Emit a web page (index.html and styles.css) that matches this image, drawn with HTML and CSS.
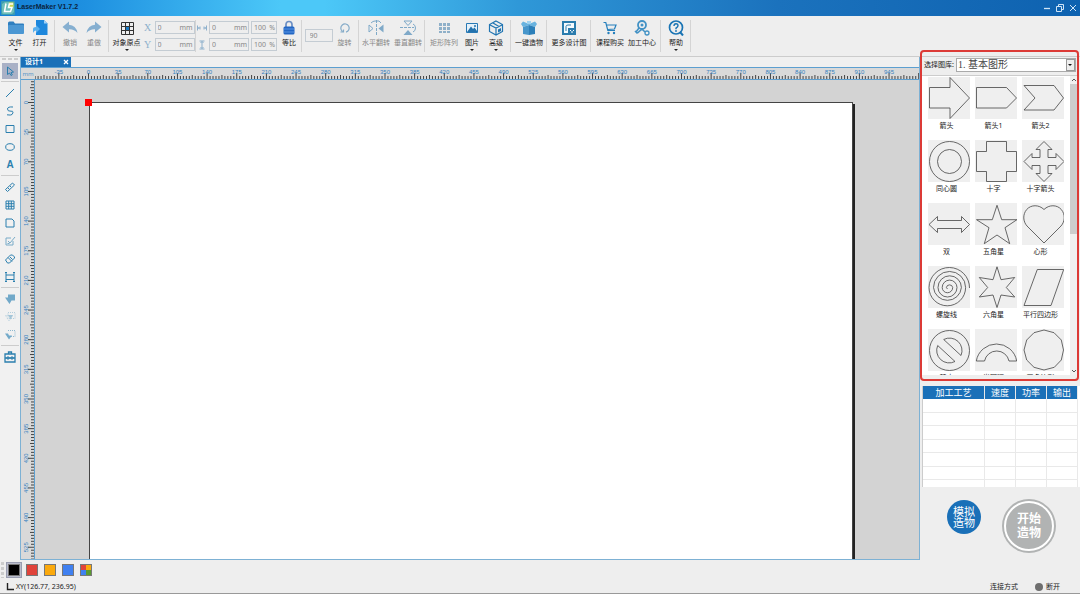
FILE: index.html
```html
<!DOCTYPE html>
<html lang="zh-CN">
<head>
    <meta charset="UTF-8">
    <meta name="viewport" content="width=device-width, initial-scale=1.0">
    <title>LaserMaker V1.7.2</title>
    <link rel="stylesheet" href="styles.css">
</head>
<body>
    <header class="titlebar">
        <svg class="logo" viewBox="0 0 14 14"><rect width="14" height="14" rx="1" fill="#3c9bb2"/><path d="M1 3l3-2h8l1 2v8l-2 2H2l-1-1z" fill="#6fbfba"/><path d="M8 1.500h4.500v4.500H8z" fill="#cfd64e"/><path d="M5 2.500L3.500 10.500H9.500L11 6.500H7.500L8.300 3H12" fill="none" stroke="#fff" stroke-width="1.500"/></svg>
        <h1>LaserMaker V1.7.2</h1>
        <div class="window-buttons">
            <button aria-label="最小化"><svg viewBox="0 0 8 8"><path d="M1 4.500h6" stroke-width="1.300"/></svg></button>
            <button aria-label="还原"><svg viewBox="0 0 8 8"><path d="M.5 2.500h5v5h-5zM2.500 2.500v-2h5v5h-2"/></svg></button>
            <button aria-label="关闭"><svg viewBox="0 0 8 8"><path d="M1 1l6 6M7 1L1 7"/></svg></button>
        </div>
    </header>

    <nav class="toolbar">
        <div class="group g-file">
            <button class="tool has-menu"><svg viewBox="0 0 16 16"><path d="M0 3q0-1.500 1.500-1.500h4L7 3.500h8q1 0 1 1V7H0z" fill="#2f7fc0"/><rect y="5" width="16" height="9" rx="1" fill="#4b97d3"/></svg>文件</button>
            <button class="tool"><svg viewBox="0 0 16 16"><path d="M4 0h8l3.500 3.500V15H4z" fill="#1d87dc"/><path d="M12 0v3.500h3.500z" fill="#9fd0f5"/><path d="M1 13V9q0-2 3-2V5l4 4-4 4v-2.500q-2 0-3 2.500z" fill="#5ab0ee"/></svg>打开</button>
        </div>
        <div class="group g-undo">
            <button class="tool dim"><svg viewBox="0 0 16 16"><path d="M.5 7L7 1.500v3.200q7 .3 8.500 8.300Q12 9 7 9.300v3.200z" fill="#86afd0"/></svg>撤销</button>
            <button class="tool dim"><svg viewBox="0 0 16 16"><path d="M15.500 7L9 1.500v3.200Q2 5 .5 13 4 9 9 9.300v3.200z" fill="#86afd0"/></svg>重做</button>
        </div>
        <div class="group g-position">
            <button class="tool wide has-menu"><svg viewBox="0 0 16 16"><path d="M6 6h4v4H6z" fill="#1779c4"/><path d="M2.500 2.500h12v12h-12zM6.500 2.500v12M10.500 2.500v12M2.500 6.500h12M2.500 10.500h12" fill="none" stroke="#333"/></svg>对象原点</button>
            <div class="fields">
                <div class="field"><label for="posX">X</label><span class="box"><input id="posX" value="0"><i>mm</i></span></div>
                <div class="field"><label for="posY">Y</label><span class="box"><input id="posY" value="0"><i>mm</i></span></div>
            </div>
        </div>
        <div class="group g-size">
            <div class="fields">
                <div class="field">
                    <label for="sizeW" aria-label="宽度"><svg viewBox="0 0 10 10"><path d="M.5 2.500v5M9.500 2.500v5M1 5h3M9 5H6M3 3.500L1.500 5 3 6.500M7 3.500L8.500 5 7 6.500"/></svg></label>
                    <span class="box"><input id="sizeW" value="0"><i>mm</i></span>
                    <span class="box percent"><input aria-label="宽度百分比" value="100"><i>%</i></span>
                </div>
                <div class="field">
                    <label for="sizeH" aria-label="高度"><svg viewBox="0 0 10 10"><path d="M2.500 1h5M2.500 9h5M5 1.500v7M3.500 3L5 1.500 6.500 3M3.500 7L5 8.500 6.500 7"/></svg></label>
                    <span class="box"><input id="sizeH" value="0"><i>mm</i></span>
                    <span class="box percent"><input aria-label="高度百分比" value="100"><i>%</i></span>
                </div>
            </div>
            <button class="tool"><svg viewBox="0 0 16 16"><path d="M5 7V4.500q0-3 3-3t3 3V7" fill="none" stroke="#6b8fc4" stroke-width="1.700"/><rect x="2.500" y="6.500" width="11" height="8" rx="1.500" fill="#2367c4"/><path d="M3 9h10M3 12h10" stroke="#5b95e2"/></svg>等比</button>
        </div>
        <div class="group g-rotate">
            <span class="box angle"><input aria-label="角度" value="90"></span>
            <button class="tool dim"><svg viewBox="0 0 16 16"><path d="M5.500 11.500A4.200 4.200 0 1 1 9 12.200M3.500 12h3V9.500" fill="none" stroke="#85abc8" stroke-width="1.200"/></svg>旋转</button>
        </div>
        <div class="group">
            <button class="tool wide dim"><svg viewBox="0 0 16 16"><path d="M8.500 0v16" stroke="#7fa9c8" stroke-dasharray="3 1"/><path d="M1 5l4 3.500L1 12z" fill="none" stroke="#7fa9c8"/><path d="M15.500 4.500l-5 4 5 4z" fill="#7fa9c8"/><path d="M3 3q2-2 4-2h4l2 2" fill="none" stroke="#7fa9c8"/></svg>水平翻转</button>
            <button class="tool wide dim"><svg viewBox="0 0 16 16"><path d="M0 7.500h14" stroke="#7fa9c8" stroke-dasharray="3 1"/><path d="M4 1h8L8 5.500z" fill="none" stroke="#7fa9c8"/><path d="M3.500 15h9L8 10z" fill="#7fa9c8"/><path d="M13 4q2.500 1 2.500 4t-2.500 4" fill="none" stroke="#7fa9c8"/></svg>垂直翻转</button>
        </div>
        <div class="group g-image">
            <button class="tool wide dim"><svg viewBox="0 0 16 16"><path d="M3 3h3v3H3zM7 3h3v3H7zM11 3h3v3h-3zM3 7h3v3H3zM7 7h3v3H7zM11 7h3v3h-3zM3 11h3v2H3zM7 11h3v2H7zM11 11h3v2h-3z" fill="#8fb0c9"/></svg>矩形阵列</button>
            <button class="tool has-menu"><svg viewBox="0 0 16 16"><path d="M2.500 3.500h11v9h-11z" fill="#e4f1fa" stroke="#2879b5"/><path d="M3 12l4-5.500 2 2.500 1.500-1.500L13 11v1z" fill="#2372ad"/><circle cx="11" cy="6" r="1" fill="#2372ad"/></svg>图片</button>
            <button class="tool has-menu"><svg viewBox="0 0 16 16"><path d="M8 1l6.500 3.500v7L8 15l-6.500-3.500v-7zM2 5l6 3 6-3M8 8v7M5 3l6 3.500" fill="none" stroke="#2175b2" stroke-width="1.200"/><path d="M10 9.500l3-1.500v3l-3 1.500z" fill="#2175b2"/></svg>高级</button>
        </div>
        <div class="group g-make">
            <button class="tool wide"><svg class="big" viewBox="0 0 16 16"><path d="M0 4l2-2.500L8 4l6-2.500L16 4l-2 3-6-2-6 2z" fill="#69b3df"/><path d="M2 7l6-2v10l-6-1z" fill="#4796cb"/><path d="M14 7L8 5v10l6-1z" fill="#2c7fb9"/><path d="M6 1h4v3H6z" fill="#9fd2ef"/></svg>一键造物</button>
        </div>
        <div class="group g-more">
            <button class="tool wide"><svg viewBox="0 0 16 16"><path d="M2 2h12v12H2z" fill="#f4fafd" stroke="#2a7cad" stroke-width="2"/><path d="M7 8h7v6H7z" fill="#2a7cad"/><path d="M5 11V6.500q0-1.500 2-1.500h3" fill="none" stroke="#2a7cad"/><path d="M9 10.500h1M12 10.500h1M10 12h2" stroke="#fff"/></svg>更多设计图</button>
        </div>
        <div class="group g-shop">
            <button class="tool wide"><svg viewBox="0 0 16 16"><path d="M1.500 2.500h2.300l2 8H13M4.300 5h9.700l-1.500 4-7 .5" fill="none" stroke="#247fbc" stroke-width="1.200"/><circle cx="6.500" cy="13" r="1.200" fill="#247fbc"/><circle cx="12" cy="13" r="1.200" fill="#247fbc"/></svg>课程购买</button>
            <button class="tool wide"><svg viewBox="0 0 16 16"><circle cx="8" cy="5" r="4" fill="none" stroke="#4392c5" stroke-width="1.800"/><circle cx="8" cy="5" r="1.500" fill="#4392c5"/><path d="M5 8l-3 4M1 11l2.500 2.500M3.500 13L8 9l3 3" fill="none" stroke="#4392c5" stroke-width="1.600"/><circle cx="13" cy="13" r="2" fill="none" stroke="#4392c5" stroke-width="1.300"/></svg>加工中心</button>
        </div>
        <div class="group g-help">
            <button class="tool has-menu"><svg viewBox="0 0 16 16"><circle cx="8" cy="7.500" r="6.500" fill="none" stroke="#1974b4" stroke-width="1.700"/><path d="M12 12l3 3.500" stroke="#1974b4" stroke-width="2"/><path d="M6 6q0-2.200 2-2.200t2 2Q10 7 8 8.200v1" fill="none" stroke="#1974b4" stroke-width="1.400"/><circle cx="8" cy="11" r=".9" fill="#1974b4"/></svg>帮助</button>
        </div>
    </nav>

    <main class="workspace">
        <aside class="toolbox">
            <span class="grip"></span>
            <button class="active" aria-label="选择"><svg viewBox="0 0 12 12"><path d="M3.500 2v7.500l2-1.500 1.500 2.500 1.300-.7L7 7.500 9.500 7z"/></svg></button>
            <hr>
            <button aria-label="直线"><svg viewBox="0 0 12 12"><path d="M2 10l8-8"/></svg></button>
            <button aria-label="曲线"><svg viewBox="0 0 12 12"><path d="M9 2Q3.500 1.500 3.500 4T7 6.200 8 9.500Q7 10.500 3 9.800"/></svg></button>
            <button aria-label="矩形"><svg viewBox="0 0 12 12"><path d="M2 2.500h8v7H2z"/></svg></button>
            <button aria-label="椭圆"><svg viewBox="0 0 12 12"><ellipse cx="6" cy="6" rx="4.300" ry="3.300"/></svg></button>
            <button class="letter" aria-label="文字">A</button>
            <hr>
            <button aria-label="测量"><svg viewBox="0 0 12 12"><path d="M1.500 8.500l7-6.500 2 2-7 6.500zM4 7l1 1M6 5l1 1"/></svg></button>
            <button aria-label="网格"><svg viewBox="0 0 12 12"><path d="M2 2h8v8H2zM4.700 2v8M7.300 2v8M2 4.700h8M2 7.300h8"/></svg></button>
            <button aria-label="倒角"><svg viewBox="0 0 12 12"><path d="M2 2h6l2 2v6H2z"/></svg></button>
            <button class="dim" aria-label="编辑"><svg viewBox="0 0 12 12"><path d="M7 3H2v7h7V6M4 6l2 2 5-6M3.500 8.500h2"/></svg></button>
            <button aria-label="橡皮擦"><svg viewBox="0 0 12 12"><path d="M1.500 7L6.500 2h2L10.500 4v1L5.500 10h-2zM4 4.500L8 8.500M6 4l2.500 2.500"/></svg></button>
            <button aria-label="平行线"><svg viewBox="0 0 12 12"><path d="M2 1.500v9M10 1.500v9M2 4h8M2 8.500h8M1 1.500h2M9 1.500h2M1 10.500h2M9 10.500h2"/></svg></button>
            <hr>
            <button class="soft" aria-label="并集"><svg viewBox="0 0 12 12"><path class="fill" d="M4 1.500h7v6H7.500L5.500 11 1 4.500h3z"/></svg></button>
            <button class="soft dim" aria-label="交集"><svg viewBox="0 0 12 12"><path d="M4 1.500h7v6H4zM1.500 4.500h7L5 10z" stroke-dasharray="1 1"/><path class="fill" d="M4 4h5L6.500 8.500z"/></svg></button>
            <button class="soft" aria-label="差集"><svg viewBox="0 0 12 12"><path d="M4 1.500h7v6H7" stroke-dasharray="1 1"/><path class="fill" d="M1 4.500h3l1 2h3L5 10.500z"/></svg></button>
            <hr>
            <button aria-label="工具箱"><svg viewBox="0 0 12 12"><path d="M1 3h10v8H1zM4.500 3V1h3v2M1 7h10" stroke-width="1.300"/><circle cx="4" cy="7" r="1.200"/><circle cx="8" cy="7" r="1.200"/></svg></button>
        </aside>

        <section class="editor">
            <div class="tabs"><div class="tab">设计1<button aria-label="关闭设计1"><svg viewBox="0 0 6 6"><path d="M1 1l4 4M5 1L1 5"/></svg></button></div></div>
            <div class="board">
                <div class="corner">mm</div>
                <div class="ruler-top"><svg id="rulerTop"></svg></div>
                <div class="ruler-left"><svg id="rulerLeft"></svg></div>
                <div class="canvas"><div class="page"><span class="origin"></span></div></div>
            </div>
        </section>

        <aside class="side">
            <section class="library">
                <div class="library-head">
                    <label for="library">选择图库:</label>
                    <div class="select">
                        <select id="library"><option>1. 基本图形</option></select>
                        <span class="arrow"></span>
                    </div>
                </div>
                <div class="library-body">
                    <ul class="shapes">
                        <li><svg viewBox="0 0 42 42"><path d="M1.500 10.500H22V.5L41.500 21 22 41.500V31H1.500z"/></svg>箭头</li>
                        <li><svg viewBox="0 0 42 42"><path d="M1.500 10.500h30L41.500 21l-10 10h-30z"/></svg>箭头1</li>
                        <li><svg viewBox="0 0 42 42"><path d="M2 8.500h30L41.500 21 32 33H2l11-12z"/></svg>箭头2</li>
                        <li><svg viewBox="0 0 42 42"><circle cx="21.500" cy="21.500" r="20"/><circle cx="21.500" cy="21.500" r="12"/></svg>同心圆</li>
                        <li><svg viewBox="0 0 42 42"><path d="M11.500 1.500h20v10h10v20h-10v10h-20v-10h-10v-20h10z"/></svg>十字</li>
                        <li><svg viewBox="0 0 42 42"><path d="M22 1.500l8 8h-4v8h8v-4l8 8-8 8v-4h-8v8h4l-8 8-8-8h4v-8h-8v4l-8-8 8-8v4h8v-8h-4z"/></svg>十字箭头</li>
                        <li><svg viewBox="0 0 42 42"><path d="M1 21.500l8.500-8v4h24v-4l8 8-8 8v-4h-24v4z"/></svg>双</li>
                        <li><svg viewBox="0 0 42 42"><path d="M22 2.300l4.700 14.400h15.200L30 24.700l4.700 16L22 32 9.300 40.700l4.700-16L1.500 16.700h15.800z"/></svg>五角星</li>
                        <li><svg viewBox="0 0 42 42"><path d="M22 6.500C17 1.500 9 1.500 4.700 6.500 .5 11.500 1 18.500 5 23L22 40l17-17c4-4.500 4.500-11.500.3-16.500C35 1.500 27 1.500 22 6.500z"/></svg>心形</li>
                        <li><svg viewBox="0 0 42 42"><path d="M41.500 22A20.200 20.200 0 0 0 1 21.500 18.300 18.300 0 0 0 37.600 21.500 16 16 0 0 0 5.500 21.500 14 14 0 0 0 33.400 21.500 11.700 11.700 0 0 0 10 21.500 9.500 9.500 0 0 0 29 21.500 7.400 7.400 0 0 0 14.200 21.500 5.200 5.200 0 0 0 24.700 21.500 3.200 3.200 0 0 0 18.400 21.500L19.500 23"/></svg>螺旋线</li>
                        <li><svg viewBox="0 0 42 42"><path d="M22 .8l4 12.900 13.700-2.200-8.400 10 8.400 9.500L26 29l-4 12.500L18 29 4.300 31l8.400-9.500-8.400-10L18 13.700z"/></svg>六角星</li>
                        <li><svg viewBox="0 0 42 42"><path d="M15.300 3.500h26.400l-12.700 36H2z"/></svg>平行四边形</li>
                        <li><svg viewBox="0 0 42 42"><circle cx="21.500" cy="21.500" r="20"/><path d="M15.700 10.500A12.500 12.500 0 0 1 33 26.500zM9.700 16.500A12.500 12.500 0 0 0 27 32.500z"/></svg>禁止</li>
                        <li><svg viewBox="0 0 42 42"><path d="M1.300 32A20.500 20.500 0 0 1 41.700 32H34A12.500 12.500 0 0 0 9.500 32z"/></svg>半圆环</li>
                        <li><svg viewBox="0 0 42 42"><path d="M41.500 21l-2.200 10-7 7.300L22 41l-10-2.700L4.700 31 2 21l2.700-10L12 3.700 22 1l10 2.700 7.300 7.300z"/></svg>正多边形</li>
                    </ul>
                    <div class="scrollbar">
                        <svg viewBox="0 0 8 8"><path d="M2 5l2-2 2 2"/></svg>
                        <span class="thumb"></span>
                        <svg viewBox="0 0 8 8"><path d="M2 3l2 2 2-2"/></svg>
                    </div>
                </div>
            </section>

            <div class="layers">
                <table>
                    <thead><tr><th class="craft">加工工艺</th><th>速度</th><th>功率</th><th>输出</th></tr></thead>
                    <tbody>
                        <tr><td></td><td></td><td></td><td></td></tr>
                        <tr><td></td><td></td><td></td><td></td></tr>
                        <tr><td></td><td></td><td></td><td></td></tr>
                        <tr><td></td><td></td><td></td><td></td></tr>
                        <tr><td></td><td></td><td></td><td></td></tr>
                        <tr><td></td><td></td><td></td><td></td></tr>
                        <tr><td></td><td></td><td></td><td></td></tr>
                    </tbody>
                </table>
            </div>

            <div class="actions">
                <button class="simulate">模拟<br>造物</button>
                <button class="start"><span>开始<br>造物</span></button>
            </div>
        </aside>
    </main>

    <div class="palette">
        <span class="grip"></span>
        <button class="swatch black selected" aria-label="黑色"></button>
        <button class="swatch red" aria-label="红色"></button>
        <button class="swatch orange" aria-label="橙色"></button>
        <button class="swatch blue" aria-label="蓝色"></button>
        <button class="swatch multi" aria-label="更多颜色"></button>
    </div>

    <footer class="status">
        <svg viewBox="0 0 8 8"><path d="M1.500 0v6.500H8" fill="none" stroke="#222" stroke-width="1.400"/></svg>
        <span>XY(126.77, 236.95)</span>
        <span class="link">连接方式</span>
        <span class="dot"></span>
        <span class="state">断开</span>
    </footer>

    <script src="ruler.js"></script>
</body>
</html>
```
FILE: styles.css
```css
*,
*::before,
*::after {
    box-sizing: border-box;
}
body {
    margin: 0;
    height: 100vh;
    display: flex;
    flex-direction: column;
    overflow: hidden;
    background: #eee;
    color: #222;
    font-family: "Noto Sans", "Noto Sans CJK SC", sans-serif;
    font-size: 7px;
    line-height: 10px;
}
button {
    margin: 0;
    padding: 0;
    border: none;
    background: none;
    color: inherit;
    font: inherit;
    cursor: pointer;
}
svg {
    display: block;
}

/* title bar */
.titlebar {
    display: flex;
    align-items: center;
    height: 16px;
    flex: none;
    background: linear-gradient(90deg, #1480d6 0%, #1e90e0 8%, #4cc8f8 26%, #4cc8f8 30%, #2f98d8 48%, #1b72bd 72%, #0e62b0 100%);
}
.titlebar .logo {
    width: 14px;
    height: 14px;
    margin-left: 1px;
}
.titlebar h1 {
    flex: 1;
    margin: 0 0 2px 2px;
    color: #0b2440;
    font-family: "Liberation Sans", sans-serif;
    font-size: 7px;
    line-height: 12px;
}
.window-buttons {
    display: flex;
    gap: 5px;
    padding-right: 3px;
}
.window-buttons svg {
    width: 8px;
    height: 8px;
    fill: none;
    stroke: #cfe4f6;
}

/* toolbar */
.toolbar {
    display: flex;
    flex: none;
    height: 41px;
    border-bottom: 1px solid #ccc;
}
.group {
    position: relative;
    display: flex;
    flex: none;
    justify-content: center;
    padding: 4px 1px 0;
}
.group::after {
    content: "";
    position: absolute;
    top: 4px;
    right: 0;
    width: 1px;
    height: 32px;
    background: #d4d4d4;
}
.g-file { width: 55px; }
.g-undo { width: 54px; }
.g-position { width: 87px; }
.g-size { width: 106px; }
.g-rotate { width: 57px; }
.g-image { width: 86px; }
.g-make { width: 36px; }
.g-more { width: 44px; }
.g-shop { width: 70px; }
.g-help { width: 30px; }
.tool {
    position: relative;
    display: flex;
    flex-direction: column;
    align-items: center;
    width: 24px;
    height: 34px;
    line-height: 13px;
    white-space: nowrap;
}
.tool.wide {
    width: 32px;
}
.tool svg {
    width: 16px;
    height: 16px;
}
.tool svg.big {
    width: 18px;
}
.tool.dim {
    color: #888;
}
.has-menu::after {
    content: "";
    position: absolute;
    bottom: 3px;
    border: 2px solid transparent;
    border-bottom: none;
    border-top-color: #222;
}
.fields {
    display: flex;
    flex-direction: column;
    gap: 4px;
    padding-top: 1px;
}
.field {
    display: flex;
    align-items: center;
    gap: 2px;
}
.field label {
    width: 10px;
    color: #8db0cc;
    font-family: "Liberation Serif", serif;
    font-size: 10px;
    text-align: center;
}
.field label svg {
    width: 10px;
    height: 10px;
    fill: none;
    stroke: #8db0cc;
}
.box {
    display: flex;
    align-items: center;
    width: 40px;
    height: 13px;
    padding: 0 1px 0 2px;
    border: 1px solid #c4ccd3;
    color: #888;
}
.box input {
    flex: 1;
    width: 10px;
    min-width: 0;
    padding: 0;
    border: none;
    outline: none;
    background: none;
    color: inherit;
    font: inherit;
}
.box i {
    font-style: normal;
}
.box.percent {
    width: 26px;
}
.g-rotate .box {
    width: 28px;
    margin: 9px 0 0;
    padding-left: 4px;
}

/* left tools */
.workspace {
    display: flex;
    flex: 1;
    min-height: 0;
}
.toolbox {
    display: flex;
    flex-direction: column;
    align-items: center;
    flex: none;
    width: 20px;
    background: #f1f1f1;
}
.toolbox .grip {
    width: 16px;
    height: 2px;
    margin: 1px 0 2px;
    background: repeating-linear-gradient(90deg, #ccc 0 4px, transparent 4px 6px);
}
.toolbox button {
    display: flex;
    align-items: center;
    justify-content: center;
    flex: none;
    width: 16px;
    height: 18px;
}
.toolbox .active {
    background: #a9b1c6;
    background-clip: content-box;
    padding: 1px 0;
}
.toolbox .letter {
    color: #2b7fae;
    font-family: "Liberation Sans", sans-serif;
    font-size: 10px;
    font-weight: bold;
}
.toolbox svg {
    width: 12px;
    height: 12px;
    fill: none;
    stroke: #2b7fae;
}
.toolbox .dim {
    opacity: 0.6;
}
.toolbox .soft svg {
    stroke: #8db8d0;
}
.toolbox .fill {
    fill: #72a9c9;
    stroke: none;
}
.toolbox hr {
    flex: none;
    width: 18px;
    height: 1px;
    margin: 1px 0 2px;
    border: none;
    background: #ccc;
}

/* drawing board */
.editor {
    display: flex;
    flex-direction: column;
    flex: 1;
    min-width: 0;
    border: solid #7db1d4;
    border-width: 0 1px 1px;
}
.tabs {
    flex: none;
    height: 11px;
    background: #f0f0f0;
    border-bottom: 1px solid #5c9fd0;
}
.tab {
    display: flex;
    align-items: center;
    justify-content: space-between;
    width: 50px;
    height: 10px;
    padding: 0 2px 0 4px;
    background: #1a70b8;
    color: #fff;
    font-weight: bold;
}
.tab svg {
    width: 6px;
    height: 6px;
    stroke: #fff;
    stroke-width: 1.3;
}
.board {
    display: grid;
    grid-template-columns: 14px 1fr;
    grid-template-rows: 12px 1fr;
    flex: 1;
    min-height: 0;
    background: #d9d9d9;
}
.corner {
    color: #5594c8;
    font-size: 6px;
    line-height: 12px;
    text-align: center;
    border-bottom: 1px solid #5c9fd0;
}
.ruler-top {
    overflow: hidden;
    border-bottom: 1px solid #5c9fd0;
}
.ruler-left {
    overflow: hidden;
    border-right: 1px solid #5c9fd0;
}
.board svg {
    width: 100%;
    height: 100%;
}
.board text {
    fill: #3681c0;
    font-family: "Liberation Sans", sans-serif;
    font-size: 6px;
    text-anchor: middle;
}
.board path {
    stroke: #444;
}
.canvas {
    display: flex;
    padding: 22px 66px 0 54px;
    overflow: hidden;
    background: #d3d3d3;
}
.page {
    position: relative;
    flex: 1;
    border: solid #444;
    border-width: 1px 1px 0;
    background: #fff;
    box-shadow: 2px 2px 0 #222;
}
.origin {
    position: absolute;
    top: -4px;
    left: -5px;
    width: 7px;
    height: 7px;
    background: #f00;
}

/* right side */
.side {
    position: relative;
    display: flex;
    flex-direction: column;
    flex: none;
    width: 160px;
}
.library {
    display: flex;
    flex-direction: column;
    height: 318px;
    padding: 0 2px;
}
.library::after {
    content: "";
    position: absolute;
    top: -7px;
    left: 0;
    width: 159px;
    height: 331px;
    border: 2px solid #dc3a36;
    border-radius: 4px;
    pointer-events: none;
}
.library-head {
    display: flex;
    align-items: center;
    gap: 2px;
    height: 18px;
    padding: 0 2px 3px;
    white-space: nowrap;
}
.select {
    position: relative;
    flex: 1;
    height: 14px;
}
.select select {
    width: 100%;
    height: 14px;
    padding: 0 1px;
    border: 1px solid #aaa;
    border-radius: 0;
    outline: none;
    appearance: none;
    background: #fff;
    color: #444;
    font-family: "Liberation Serif", "Noto Sans CJK SC", serif;
    font-size: 10px;
    line-height: 12px;
}
.select .arrow {
    position: absolute;
    top: 1px;
    right: 1px;
    width: 9px;
    height: 12px;
    border: 1px solid #999;
    background: #eee;
    pointer-events: none;
}
.select .arrow::after {
    content: "";
    position: absolute;
    top: 4px;
    left: 1px;
    border: 2px solid transparent;
    border-bottom: none;
    border-top-color: #111;
}
.library-body {
    display: flex;
    flex: 1;
    min-height: 0;
    border-top: 1px solid #ccc;
    background: #fff;
}
.shapes {
    display: grid;
    grid-template-columns: repeat(3, 42px);
    grid-auto-rows: 63px;
    gap: 0 5px;
    flex: 1;
    margin: 0;
    padding: 1px 0 0 6px;
    overflow: hidden;
    list-style: none;
}
.shapes li {
    padding-right: 5px;
    line-height: 13px;
    text-align: center;
    white-space: nowrap;
}
.shapes svg {
    width: 42px;
    height: 42px;
    background: #efefef;
    fill: none;
    stroke: #444;
    stroke-width: 0.8;
}
.scrollbar {
    display: flex;
    flex-direction: column;
    justify-content: space-between;
    width: 8px;
    background: #f0f0f0;
}
.scrollbar svg {
    width: 8px;
    height: 8px;
    fill: none;
    stroke: #555;
}
.scrollbar .thumb {
    flex: none;
    height: 50%;
    margin-bottom: auto;
    background: #cdcdcd;
}
.layers {
    flex: none;
    height: 101px;
    margin: 11px 0 0 2px;
    overflow: hidden;
    border-left: 1px solid #ccc;
    background: #fff;
}
.layers table {
    width: 155px;
    border-collapse: separate;
    border-spacing: 0;
    table-layout: fixed;
}
.layers th,
.layers td {
    height: 13px;
    padding: 0;
    border-right: 1px solid #e9e9e9;
    border-bottom: 1px solid #e9e9e9;
}
.layers tr:nth-child(odd) td {
    height: 14px;
}
.layers th {
    width: 31px;
    border-bottom: none;
    background: #1a70b8;
    color: #fff;
    font-size: 9px;
    font-weight: normal;
    line-height: 13px;
}
.layers .craft {
    width: 62px;
}
.actions {
    display: flex;
    align-items: flex-start;
    gap: 21px;
    padding: 12px 0 0 27px;
}
.simulate {
    width: 34px;
    height: 34px;
    margin-top: 1px;
    border-radius: 50%;
    background: #1a70b8;
    color: #fff;
    font-size: 11px;
    line-height: 11px;
}
.start {
    width: 54px;
    height: 54px;
    padding: 2px;
    border-radius: 50%;
    background: #b1b3b3;
    color: #fff;
    font-size: 12px;
    font-weight: bold;
    line-height: 14px;
}
.start span {
    display: flex;
    align-items: center;
    justify-content: center;
    width: 50px;
    height: 50px;
    border: 2px solid #fff;
    border-radius: 50%;
}

/* bottom bars */
.palette {
    display: flex;
    align-items: center;
    gap: 2px;
    flex: none;
    height: 20px;
}
.palette .grip {
    width: 3px;
    height: 16px;
    margin-left: 1px;
    background: repeating-linear-gradient(#ccc 0 3px, transparent 3px 5px);
}
.swatch {
    width: 16px;
    height: 16px;
    padding: 1px;
    border: 1px solid transparent;
}
.swatch::after {
    content: "";
    display: block;
    width: 12px;
    height: 12px;
    border: 1px solid #777;
    background: #000;
}
.swatch.selected {
    background: #b9bccb;
    border-color: #999db0;
}
.swatch.red::after { background: #e0433a; }
.swatch.orange::after { background: #fba90c; }
.swatch.blue::after { background: #3f80f0; }
.swatch.multi::after { background: conic-gradient(#fba90c 25%, #5a9a2f 0 50%, #3f80f0 0 75%, #e0433a 0); }
.status {
    display: flex;
    align-items: center;
    flex: none;
    height: 14px;
    padding: 0 20px 0 6px;
    border-bottom: 1px solid #999;
}
.status svg {
    width: 8px;
    height: 8px;
    margin-right: 2px;
}
.status .link {
    margin-left: auto;
}
.status .dot {
    width: 8px;
    height: 8px;
    margin: 0 3px 0 17px;
    border-radius: 50%;
    background: #6e6e6e;
}
```
FILE: ruler.js
```javascript
// 35 units between two labels, 10 ticks each
const STEP = 29.65;
const NS = 'http://www.w3.org/2000/svg';

function drawRuler(id, origin, first, last, vertical) {
    const svg = document.getElementById(id);
    const ticks = document.createElementNS(NS, 'path');
    let d = '';
    for (let i = (first - 1) * 10; i <= (last + 1) * 10; i++) {
        const pos = origin + i * STEP / 10;
        const size = i % 10 === 0 ? 6 : i % 5 === 0 ? 4 : 3;
        d += vertical ? `M13 ${pos}h${-size}` : `M${pos} 11v${-size}`;
    }
    ticks.setAttribute('d', d);
    svg.appendChild(ticks);

    for (let i = first; i <= last; i++) {
        const pos = origin + i * STEP;
        const text = document.createElementNS(NS, 'text');
        text.textContent = i * 35;
        if (vertical) {
            text.setAttribute('transform', `translate(7 ${pos}) rotate(-90)`);
        } else {
            text.setAttribute('x', pos);
            text.setAttribute('y', 6);
        }
        svg.appendChild(text);
    }
}

drawRuler('rulerTop', 53.5, -1, 27, false);
drawRuler('rulerLeft', 22.5, 0, 15, true);
```
